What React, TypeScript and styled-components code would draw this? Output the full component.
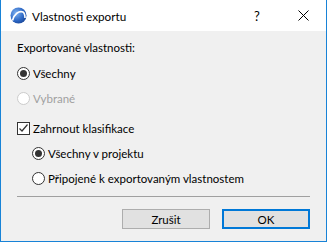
import styled, { createGlobalStyle } from "styled-components"

const font = `Lato, "Noto Sans", "Liberation Sans", sans-serif`

const GlobalStyle = createGlobalStyle`
  html, body { margin: 0; padding: 0; background: #ffffff; }
  body { font-family: ${font}; }
`

const Window = styled.div`
  width: 327px;
  height: 242px;
  box-sizing: border-box;
  border: 1px solid #1883d7;
  border-top: none;
  display: flex;
  flex-direction: column;
  background: #f0f0f0;
  font-family: ${font};
  font-size: 11.5px;
  color: #000000;
`

const TitleBar = styled.div`
  height: 31px;
  flex-shrink: 0;
  background: #ffffff;
  display: flex;
  align-items: center;
  padding-left: 9px;
`

const TitleText = styled.span`
  margin-left: 5px;
  font-size: 11.7px;
  color: #000000;
  flex-grow: 1;
`

const TitleButton = styled.div`
  width: 46px;
  height: 31px;
  display: flex;
  align-items: center;
  justify-content: center;
  font-size: 13px;
`

const Body = styled.div`
  flex-grow: 1;
  display: flex;
  flex-direction: column;
  padding: 9px 16px 0 16px;
`

const GroupLabel = styled.div`
  height: 16px;
  line-height: 16px;
  margin-bottom: 5px;
`

const Row = styled.label<{ $indent?: boolean; $disabled?: boolean; $gapTop?: boolean }>`
  height: 25px;
  display: flex;
  align-items: center;
  gap: 3px;
  padding-left: ${p => (p.$indent ? "15px" : "0")};
  margin-top: ${p => (p.$gapTop ? "5px" : "0")};
  color: ${p => (p.$disabled ? "#a0a0a0" : "#000000")};
`

const Radio = styled.span<{ $checked?: boolean; $disabled?: boolean }>`
  width: 13px;
  height: 13px;
  box-sizing: border-box;
  border-radius: 50%;
  border: 1px solid ${p => (p.$disabled ? "#cccccc" : "#333333")};
  background: #ffffff;
  display: flex;
  align-items: center;
  justify-content: center;
  &::after {
    content: "";
    width: 7px;
    height: 7px;
    border-radius: 50%;
    background: ${p => (p.$checked ? "#333333" : "transparent")};
  }
`

const Checkbox = styled.span`
  width: 13px;
  height: 13px;
  box-sizing: border-box;
  border: 1px solid #333333;
  background: #ffffff;
  display: flex;
  align-items: center;
  justify-content: center;
`

const Separator = styled.div`
  height: 1px;
  margin-top: 5px;
  background: #a0a0a0;
`

const ButtonRow = styled.div`
  display: flex;
  justify-content: flex-end;
  gap: 12px;
  margin-top: 12px;
`

const Button = styled.div<{ $primary?: boolean }>`
  width: 88px;
  height: 20px;
  box-sizing: border-box;
  background: #e1e1e1;
  border: ${p => (p.$primary ? "2px solid #0078d7" : "1px solid #adadad")};
  display: flex;
  align-items: center;
  justify-content: center;
`

function AppIcon() {
  return (
    <svg width="17" height="17" viewBox="0 0 17 17">
      <defs>
        <radialGradient id="g" cx="0.35" cy="0.35" r="0.8">
          <stop offset="0" stopColor="#7fb2f0" />
          <stop offset="0.6" stopColor="#2b66c4" />
          <stop offset="1" stopColor="#173f8a" />
        </radialGradient>
      </defs>
      <circle cx="8.5" cy="8.5" r="8" fill="url(#g)" />
      <path d="M2.5 13.5 C4 7 9 3.5 13 5 C14.5 6 15 8 15 11" stroke="#ffffff" strokeWidth="1.6" fill="none" />
    </svg>
  )
}

export default function App() {
  return (
    <>
      <GlobalStyle />
      <Window>
        <TitleBar>
          <AppIcon />
          <TitleText>Vlastnosti exportu</TitleText>
          <TitleButton>?</TitleButton>
          <TitleButton>
            <svg width="11" height="11" viewBox="0 0 11 11">
              <path d="M0.5 0.5 L10.5 10.5 M10.5 0.5 L0.5 10.5" stroke="#000000" strokeWidth="1" />
            </svg>
          </TitleButton>
        </TitleBar>
        <Body>
          <GroupLabel>Exportované vlastnosti:</GroupLabel>
          <Row>
            <Radio $checked />
            Všechny
          </Row>
          <Row $disabled>
            <Radio $disabled />
            Vybrané
          </Row>
          <Row $gapTop>
            <Checkbox>
              <svg width="11" height="11" viewBox="0 0 11 11">
                <path d="M1.5 5.5 L4 8 L9.5 1.5" stroke="#333333" strokeWidth="1.2" fill="none" />
              </svg>
            </Checkbox>
            Zahrnout klasifikace
          </Row>
          <Row $indent>
            <Radio $checked />
            Všechny v projektu
          </Row>
          <Row $indent>
            <Radio />
            Připojené k exportovaným vlastnostem
          </Row>
          <Separator />
          <ButtonRow>
            <Button>Zrušit</Button>
            <Button $primary>OK</Button>
          </ButtonRow>
        </Body>
      </Window>
    </>
  )
}
